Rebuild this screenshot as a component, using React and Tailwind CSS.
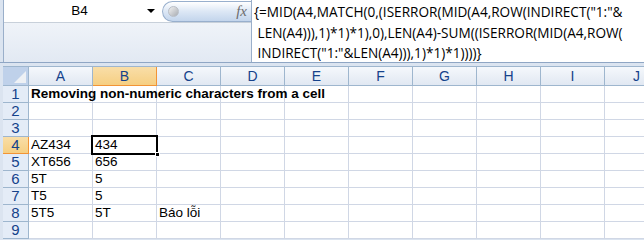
import React from "react";

const cols = ["A", "B", "C", "D", "E", "F", "G", "H", "I", "J"];

const rows = [
  { n: 1, cells: { A: "Removing non-numeric characters from a cell" }, bold: true },
  { n: 2, cells: {} },
  { n: 3, cells: {} },
  { n: 4, cells: { A: "AZ434", B: "434" } },
  { n: 5, cells: { A: "XT656", B: "656" } },
  { n: 6, cells: { A: "5T", B: "5" } },
  { n: 7, cells: { A: "T5", B: "5" } },
  { n: 8, cells: { A: "5T5", B: "5T", C: "Báo lỗi" } },
  { n: 9, cells: {} },
];

const formula = [
  '{=MID(A4,MATCH(0,(ISERROR(MID(A4,ROW(INDIRECT("1:"&',
  ' LEN(A4))),1)*1)*1),0),LEN(A4)-SUM((ISERROR(MID(A4,ROW(',
  ' INDIRECT("1:"&LEN(A4))),1)*1)*1))))}',
];

function FormulaBar() {
  return (
    <div className="flex h-[63px] border-b border-[#8fa6c4]">
      {/* name box + fx */}
      <div className="w-[248px] flex flex-col bg-gradient-to-b from-[#f7f9fc] to-[#e2e9f3] border-l border-[#9aafca] ml-[3px]">
        <div className="h-[23px] flex items-center border-b border-[#c8d0da] bg-white">
          <div className="w-[158px] flex items-center h-full">
            <span className="flex-1 text-center text-[13.5px] text-black pl-[8px] font-['Liberation_Sans',Arial,sans-serif]">B4</span>
            <span className="w-0 h-0 border-l-[4px] border-r-[4px] border-t-[4px] border-l-transparent border-r-transparent border-t-black mr-[7px]"></span>
          </div>
          <div className="flex-1 h-[21px] rounded-l-full border border-r-0 border-[#98afcd] bg-gradient-to-b from-[#ffffff] via-[#dce7f5] to-[#c3d5ec] flex items-center justify-between pl-[5px] pr-[3px]">
            <span className="w-[11px] h-[11px] rounded-full bg-gradient-to-br from-[#f2f2f2] to-[#a9adb3] border border-[#b9bec6]"></span>
            <span className="text-[15px] italic text-[#6d6d6d] font-['Liberation_Serif',serif] leading-none pr-[1px]">fx</span>
          </div>
        </div>
      </div>
      <div className="flex-1 bg-white border-l border-[#9aafca] pl-[2px] pt-[2px] font-['Open_Sans',sans-serif] text-[13.6px] leading-[20.5px] text-black whitespace-pre">
        {formula.map((l, i) => (
          <div key={i}>{l}</div>
        ))}
      </div>
    </div>
  );
}

function Grid() {
  return (
    <div className="flex flex-col pl-[3px] bg-[#dbe4f0] font-['Liberation_Sans',Arial,sans-serif] text-[13.5px]">
      {/* header row */}
      <div className="flex h-[20px] mt-[3px] border-t border-[#9eb6ce]">
        <div className="w-[26px] shrink-0 border-r border-b border-[#9eb6ce] bg-[#bfd1ea] relative">
          <span className="absolute right-[2px] bottom-[2px] w-0 h-0" style={{ borderBottom: "12px solid #eef1f5", borderLeft: "12px solid transparent" }}></span>
        </div>
        {cols.map((c) => (
          <div
            key={c}
            className={
              c === "B"
                ? "w-[64px] shrink-0 flex items-center justify-center border-r border-b border-[#f29436] bg-gradient-to-b from-[#f9dea8] to-[#f6cf82] text-[#15428b] text-[14px]"
                : "w-[64px] shrink-0 flex items-center justify-center border-r border-b border-[#9eb6ce] bg-gradient-to-b from-[#f5f8fc] to-[#e1e8f2] text-[#15428b] text-[14px]"
            }
          >
            {c}
          </div>
        ))}
      </div>
      {rows.map((r) => (
        <div key={r.n} className="flex h-[17px]">
          <div
            className={
              r.n === 4
                ? "w-[26px] shrink-0 flex items-center justify-center border-r border-b border-[#f29436] bg-gradient-to-b from-[#f9dea8] to-[#f6cf82] text-[#15428b] text-[15px]"
                : "w-[26px] shrink-0 flex items-center justify-center border-r border-b border-[#9eb6ce] bg-[#e4ecf7] text-[#15428b] text-[15px]"
            }
          >
            {r.n}
          </div>
          {cols.map((c) => {
            const active = r.n === 4 && c === "B";
            return (
              <div
                key={c}
                className="w-[64px] shrink-0 relative bg-white border-r border-b border-[#d0d7e5] text-black leading-[16px]"
              >
                {r.cells[c] && (
                  <span
                    className={
                      (r.bold ? "font-bold " : "") +
                      "absolute left-[2px] top-0 whitespace-nowrap z-10"
                    }
                  >
                    {r.cells[c]}
                  </span>
                )}
                {active && (
                  <>
                    <span className="absolute left-[-2px] top-[-2px] right-[-2px] bottom-[-2px] border-2 border-black z-20"></span>
                    <span className="absolute right-[-4px] bottom-[-4px] w-[5px] h-[5px] bg-black border border-white z-30"></span>
                  </>
                )}
              </div>
            );
          })}
        </div>
      ))}
    </div>
  );
}

export default function App() {
  return (
    <div className="w-[644px] h-[240px] overflow-hidden bg-[#dbe4f0]">
      <FormulaBar />
      <Grid />
    </div>
  );
}
